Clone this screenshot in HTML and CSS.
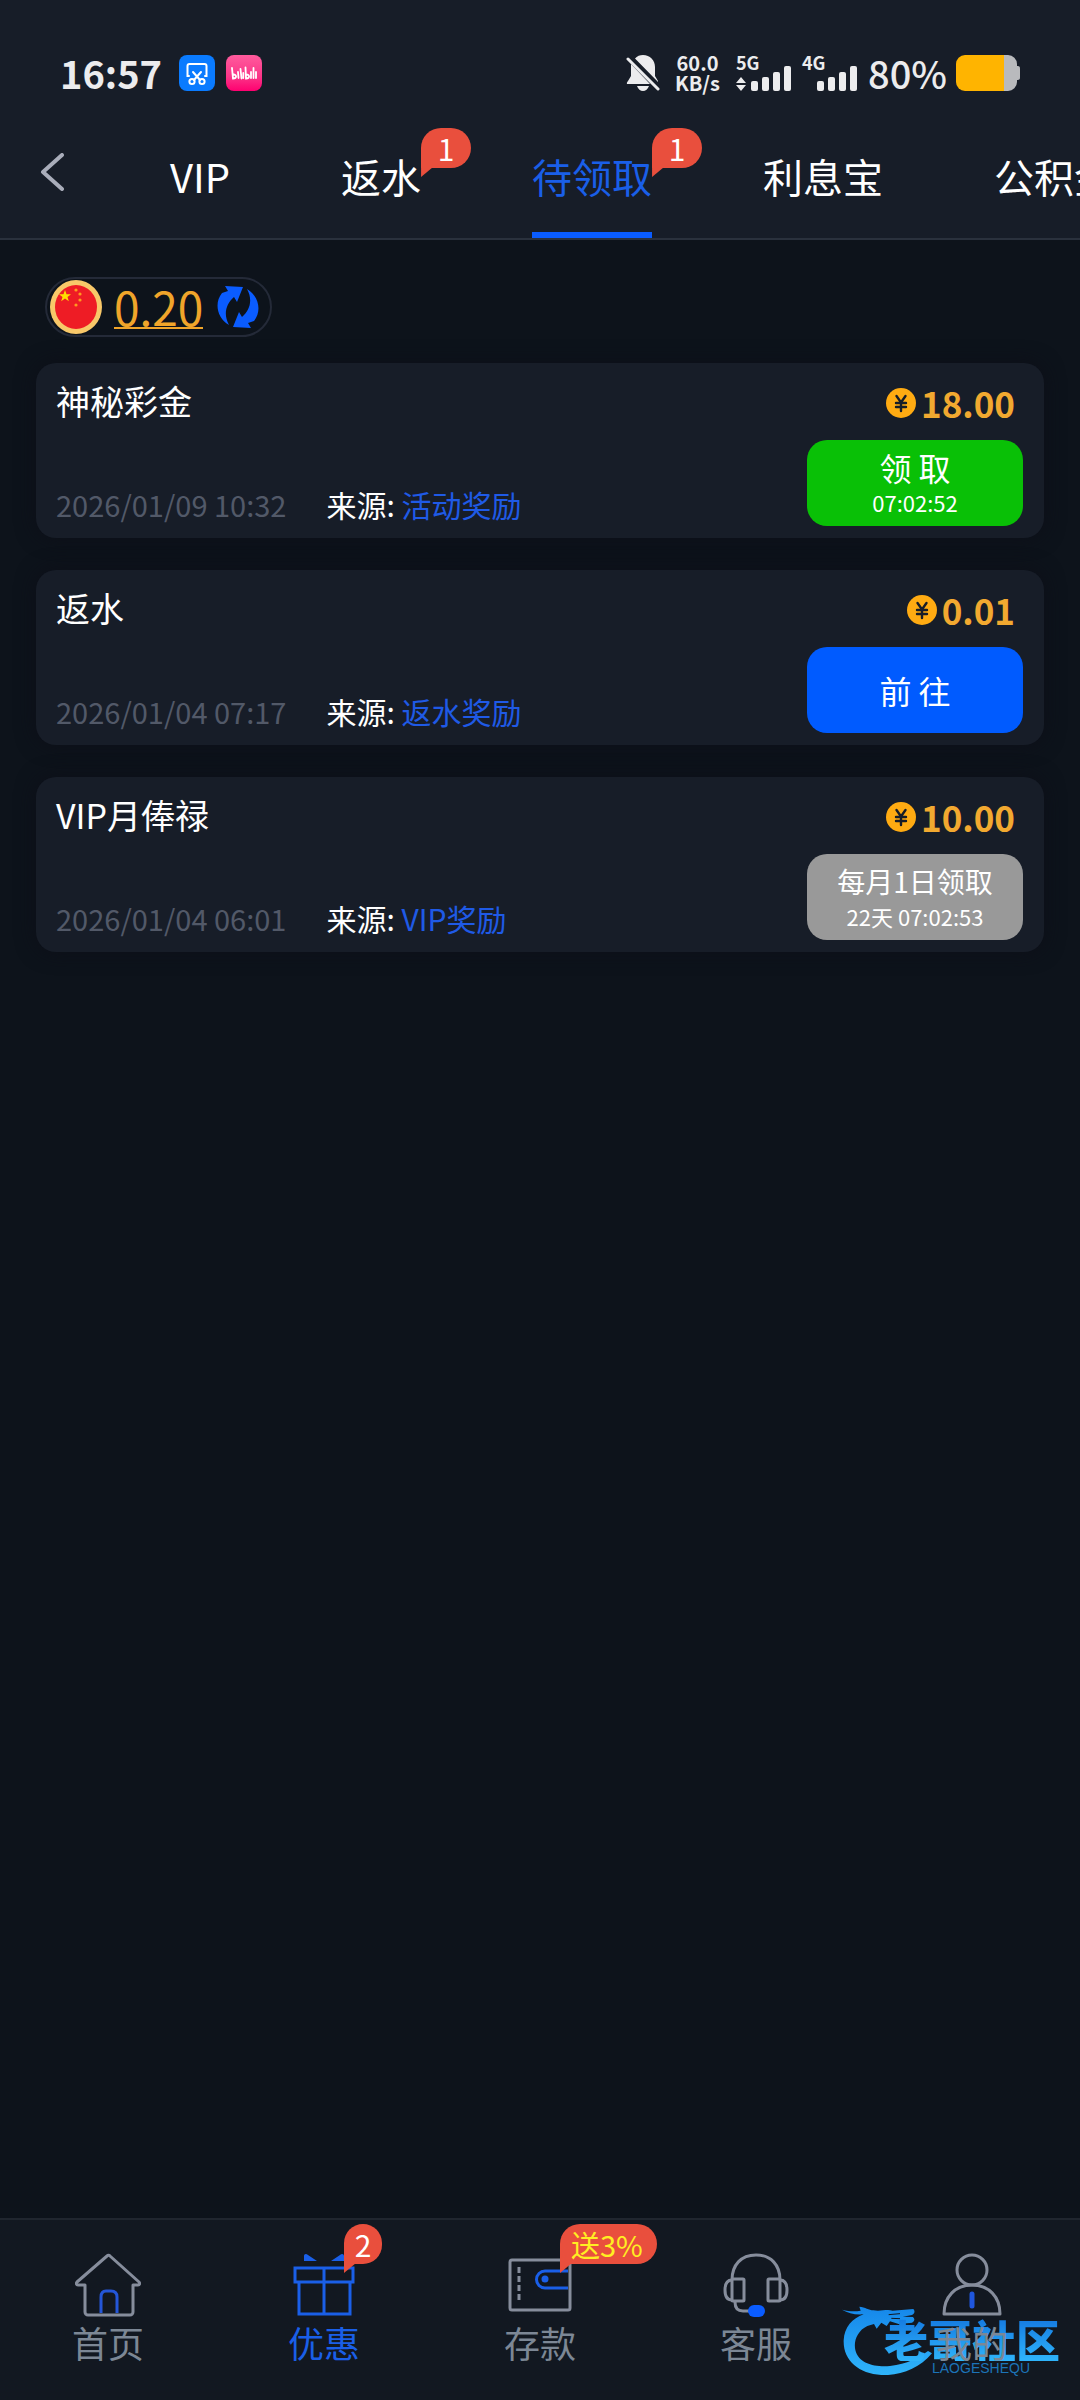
FILE: index.html
```html
<!DOCTYPE html>
<html lang="zh-CN">
<head>
<meta charset="utf-8">
<meta name="viewport" content="width=device-width, initial-scale=1">
<title>待领取</title>
<link rel="stylesheet" href="styles.css">
</head>
<body>
<header class="header">
  <div class="status">
    <div class="status-left">
      <span class="clock">16:57</span>
      <svg class="app-icon" viewBox="0 0 36 36" aria-hidden="true">
        <rect width="36" height="36" rx="8" fill="#0a7bff"/>
        <g fill="none" stroke="#fff" stroke-width="2" stroke-linecap="round">
          <path d="M10 21H8.500V11a2 2 0 0 1 2-2h15a2 2 0 0 1 2 2v10H26"/>
          <path d="M14 17l7 8M22 17l-7 8"/>
          <circle cx="13" cy="26.500" r="2.600"/><circle cx="23" cy="26.500" r="2.600"/>
        </g>
      </svg>
      <svg class="app-icon" viewBox="0 0 36 36" aria-hidden="true">
        <defs><linearGradient id="pink" x2="0" y2="1"><stop offset="0" stop-color="#ff5b9d"/><stop offset=".6" stop-color="#fb3588"/><stop offset="1" stop-color="#ff0070"/></linearGradient></defs>
        <rect width="36" height="36" rx="8" fill="url(#pink)"/>
        <g fill="none" stroke="#fff" stroke-width="1.800" stroke-linecap="round">
          <path d="M6 13l1 10.500c4 0 4-4 .500-4M12 17l.500 6M14.500 14l1 9.500M17.300 18v5M19.500 12.500l.500 11c4 0 4-4 .500-4M25 17v6M27.500 13v10M30 17v6"/>
        </g>
      </svg>
    </div>
    <div class="status-right">
      <svg class="bell" viewBox="0 0 34 36" aria-hidden="true">
        <path fill="#ececee" d="M9 3.500C11 1 14 0 17 0c7 0 12 5 12 12v9l3 5v1L9 3.500zM5 9l19 20H2c-2 0-1-2 0-3l3-5zM11 31h12c-1 3-3.500 5-6 5s-5-2-6-5z"/>
        <path stroke="#ececee" stroke-width="3" stroke-linecap="round" d="M2 4l30 30"/>
      </svg>
      <div class="speed"><span>60.0</span><span>KB/s</span></div>
      <div class="signal">
        <span>5G</span>
        <svg viewBox="0 0 56 26" aria-hidden="true"><path fill="#ececee" d="M0 18l5-6 5 6zM0 20h10l-5 6z"/><g fill="#ececee"><rect x="15" y="16" width="7" height="10" rx="2"/><rect x="26" y="12" width="7" height="14" rx="2"/><rect x="37" y="7" width="7" height="19" rx="2"/><rect x="48" y="1" width="7" height="25" rx="2"/></g></svg>
      </div>
      <div class="signal">
        <span>4G</span>
        <svg viewBox="0 0 56 26" aria-hidden="true"><g fill="#ececee"><rect x="15" y="16" width="7" height="10" rx="2"/><rect x="26" y="12" width="7" height="14" rx="2"/><rect x="37" y="7" width="7" height="19" rx="2"/><rect x="48" y="1" width="7" height="25" rx="2"/></g></svg>
      </div>
      <span class="percent">80%</span>
      <svg class="battery" viewBox="0 0 64 36" aria-hidden="true">
        <path fill="#b9babd" d="M40 0h12a9 9 0 0 1 9 9v2c3 0 3 1 3 3v8c0 2 0 3-3 3v2a9 9 0 0 1-9 9H40z"/>
        <path fill="#ffb400" d="M9 0h39v36H9a9 9 0 0 1-9-9V9a9 9 0 0 1 9-9z"/>
      </svg>
    </div>
  </div>
  <div class="tabbar">
    <button class="back" type="button" aria-label="返回">
      <svg viewBox="0 0 24 38" aria-hidden="true"><path d="M22 2L3 19l19 17" fill="none" stroke="#a9adba" stroke-width="4" stroke-linecap="round" stroke-linejoin="round"/></svg>
    </button>
    <nav class="tabs">
      <a class="tab" href="#vip">VIP</a>
      <a class="tab" href="#rebate">返水<span class="badge">1</span></a>
      <a class="tab active" href="#pending" aria-current="page">待领取<span class="badge">1</span></a>
      <a class="tab" href="#interest">利息宝</a>
      <a class="tab" href="#fund">公积金</a>
    </nav>
  </div>
</header>

<main class="main">
  <div class="balance">
    <svg class="flag" viewBox="0 0 52 54" aria-hidden="true">
      <ellipse cx="26" cy="27" rx="26" ry="27" fill="#f8c869"/>
      <ellipse cx="26" cy="27" rx="21" ry="22" fill="#ee1c25"/>
      <path fill="#ffde00" d="M15 10l1.500 4.200H21l-3.500 2.700 1.300 4.300L15 18.600l-3.800 2.600 1.300-4.300L9 14.200h4.500z"/>
      <g fill="#ff9a1f"><circle cx="26" cy="10" r="1.600"/><circle cx="30" cy="14" r="1.600"/><circle cx="30" cy="20" r="1.600"/><circle cx="26" cy="25" r="1.600"/></g>
    </svg>
    <a class="balance-value" href="#balance">0.20</a>
    <button class="refresh" type="button" aria-label="刷新">
      <svg viewBox="0 0 42 42" aria-hidden="true"><g fill="#0a5cff"><path d="M8 0L26 1L20 16L17 11C9 18 6 28 12 39C0 32-3 17 5 7L11 5z"/><path d="M34 42L16 41L22 26L25 31C33 24 36 14 30 3C42 10 45 25 37 35L31 37z"/></g></svg>
    </button>
  </div>

  <ul class="cards">
    <li class="card">
      <div class="info">
        <h2 class="title">神秘彩金</h2>
        <p class="meta"><time class="date">2026/01/09 10:32</time><span class="source">来源: <a href="#activity">活动奖励</a></span></p>
      </div>
      <div class="side">
        <p class="amount"><svg viewBox="0 0 30 30" aria-hidden="true"><circle cx="15" cy="15" r="15" fill="#ffab12"/><path d="M10.500 8l4.500 6.500L19.500 8M10 15h10M10 19h10M15 14.500V23" fill="none" stroke="#171d28" stroke-width="2.400" stroke-linecap="round"/></svg>18.00</p>
        <button class="action green" type="button"><span class="action-main">领 取</span><span class="action-time">07:02:52</span></button>
      </div>
    </li>
    <li class="card">
      <div class="info">
        <h2 class="title">返水</h2>
        <p class="meta"><time class="date">2026/01/04 07:17</time><span class="source">来源: <a href="#rebate">返水奖励</a></span></p>
      </div>
      <div class="side">
        <p class="amount"><svg viewBox="0 0 30 30" aria-hidden="true"><circle cx="15" cy="15" r="15" fill="#ffab12"/><path d="M10.500 8l4.500 6.500L19.500 8M10 15h10M10 19h10M15 14.500V23" fill="none" stroke="#171d28" stroke-width="2.400" stroke-linecap="round"/></svg>0.01</p>
        <button class="action blue" type="button"><span class="action-main">前 往</span></button>
      </div>
    </li>
    <li class="card">
      <div class="info">
        <h2 class="title">VIP月俸禄</h2>
        <p class="meta"><time class="date">2026/01/04 06:01</time><span class="source">来源: <a href="#vip">VIP奖励</a></span></p>
      </div>
      <div class="side">
        <p class="amount"><svg viewBox="0 0 30 30" aria-hidden="true"><circle cx="15" cy="15" r="15" fill="#ffab12"/><path d="M10.500 8l4.500 6.500L19.500 8M10 15h10M10 19h10M15 14.500V23" fill="none" stroke="#171d28" stroke-width="2.400" stroke-linecap="round"/></svg>10.00</p>
        <button class="action grey" type="button"><span class="action-main small">每月1日领取</span><span class="action-time">22天 07:02:53</span></button>
      </div>
    </li>
  </ul>
</main>

<nav class="bottom">
  <div class="mark">
    <svg viewBox="66 306 660 216" aria-hidden="true">
      <defs><linearGradient id="drag" x2="0" y2="1"><stop offset="0" stop-color="#1587ea"/><stop offset="1" stop-color="#2fb4fa"/></linearGradient></defs>
      <path fill="url(#drag)" d="M66 326c22 6 40 6 56 3l-4-12c18 2 28 10 42 11 22 4 40-4 58 1l62-5c6 6 4 14-4 18l-28 5 30 1c8 5 6 13-2 17l-40 4-26-8-10 14-16-10-14 18-8-14-20 6c-30 14-42 46-36 72 10 42 60 52 104 48 52-6 86-25 114-45l12 7c-38 46-96 68-152 65-68-4-115-44-113-104 2-40 26-66 60-78-28 2-46-4-65-14z"/>
      <path d="M206 341l34-3M214 352l26 1" stroke="#121821" stroke-width="3"/>
    </svg>
    <span class="mark-name">老哥社区</span>
    <span class="mark-latin">LAOGESHEQU</span>
  </div>
  <a class="item" href="#home">
    <svg viewBox="0 0 66 64" aria-hidden="true"><path d="M10 32v27a3 3 0 0 0 3 3h42a3 3 0 0 0 3-3V32h5c2 0 2-2 1-3L35 3a2 2 0 0 0-3 0L2 29c-1 1-1 3 1 3z" fill="none" stroke="#868d9c" stroke-width="3" stroke-linejoin="round"/><path d="M26 60V44c0-4 2-6 5-6h5c4 0 6 2 6 6v16" fill="none" stroke="#2456d8" stroke-width="3"/></svg>
    <span>首页</span>
  </a>
  <a class="item active" href="#offers">
    <span class="badge">2</span>
    <svg viewBox="0 0 66 64" aria-hidden="true"><g fill="none" stroke="#1a5fe8" stroke-width="3"><path d="M4 15h58v14H4zM8 29h51v32H8zM33 15v46"/></g><path fill="#1a5fe8" d="M13 8V3c0-2 2-3 4-1l9 6zM53 8V3c0-2-2-3-4-1l-9 6z"/></svg>
    <span>优惠</span>
  </a>
  <a class="item" href="#deposit">
    <span class="badge gift">送3%</span>
    <svg viewBox="0 0 66 64" aria-hidden="true"><rect x="3" y="7" width="60" height="50" rx="2" fill="none" stroke="#868d9c" stroke-width="3"/><path d="M12 14v36" stroke="#868d9c" stroke-width="3" stroke-dasharray="6 3"/><path d="M61 18H38a8 8 0 0 0 0 17h23" fill="none" stroke="#1a5fe8" stroke-width="3"/><circle cx="38" cy="26" r="3.500" fill="#1a5fe8"/></svg>
    <span>存款</span>
  </a>
  <a class="item" href="#service">
    <svg viewBox="0 0 66 64" aria-hidden="true"><g fill="none" stroke="#868d9c" stroke-width="3"><path d="M9 27c0-15 9-25 24-25s24 10 24 25"/><rect x="9" y="26" width="12" height="22" rx="1"/><rect x="45" y="26" width="12" height="22" rx="1"/><path d="M9 27c-4 0-7 3-7 10s3 10 7 10M57 27c4 0 7 3 7 10s-3 10-7 10M12 49c0 6 3 9 8 9h6"/></g><rect x="25" y="52" width="17" height="12" rx="6" fill="#0a5cff"/></svg>
    <span>客服</span>
  </a>
  <a class="item" href="#mine">
    <svg viewBox="0 0 66 64" aria-hidden="true"><g fill="none" stroke="#868d9c" stroke-width="3" stroke-linejoin="round"><circle cx="33" cy="17" r="15"/><path d="M5 61c0-17 11-29 28-29s28 12 28 29z"/></g><path d="M33 41v12" stroke="#1f56dd" stroke-width="5" stroke-linecap="round"/></svg>
    <span>我的</span>
  </a>
</nav>
</body>
</html>
```
FILE: styles.css
```css
* {
  box-sizing: border-box;
}

body {
  margin: 0;
  min-height: 100vh;
  display: flex;
  flex-direction: column;
  overflow-x: hidden;
  background: #0d131b;
  color: #fff;
  font-family: "Noto Sans CJK SC", "Noto Sans", sans-serif;
}

a {
  color: inherit;
  text-decoration: none;
}

button {
  border: 0;
  padding: 0;
  background: none;
  color: inherit;
  font: inherit;
}

h2, p, ul {
  margin: 0;
  padding: 0;
  font-weight: 400;
  list-style: none;
}

svg {
  display: block;
  flex: none;
}

/* Header */
.header {
  border-bottom: 2px solid #2a313d;
  background: #171d28;
}

.status {
  display: flex;
  justify-content: space-between;
  align-items: center;
  height: 110px;
  padding: 36px 60px 0;
  color: #ececee;
}

.status-left, .status-right {
  display: flex;
  align-items: center;
}

.status-left {
  gap: 11px;
}

.clock {
  margin-right: 6px;
  font-size: 38px;
  font-weight: 700;
  line-height: 44px;
}

.app-icon {
  width: 36px;
  height: 36px;
}

.bell {
  width: 34px;
  height: 36px;
  margin-right: 15px;
}

.speed {
  display: grid;
  margin-right: 16px;
  font-size: 20px;
  font-weight: 700;
  line-height: 20px;
  text-align: center;
}

.signal {
  position: relative;
  padding-top: 10px;
  margin-right: 10px;
}

.signal span {
  position: absolute;
  top: -3px;
  left: 0;
  font-size: 18px;
  font-weight: 700;
  line-height: 20px;
}

.signal svg {
  width: 56px;
  height: 26px;
}

.percent {
  margin-right: 9px;
  font-size: 38px;
  font-weight: 500;
  line-height: 44px;
}

.battery {
  width: 64px;
  height: 36px;
}

.tabbar {
  display: flex;
  overflow: hidden;
}

.back {
  flex: none;
  width: 104px;
  padding: 0 0 4px 40px;
}

.back svg {
  width: 24px;
  height: 38px;
}

.tabs {
  display: flex;
  gap: 111px;
  padding-left: 66px;
}

.tab {
  position: relative;
  padding: 38px 0 28px;
  border-bottom: 6px solid transparent;
  font-size: 40px;
  line-height: 56px;
  white-space: nowrap;
}

.tab.active {
  border-color: #0a5cff;
  color: #1a5fe8;
}

.badge {
  position: absolute;
  top: 18px;
  left: 100%;
  min-width: 50px;
  height: 40px;
  padding: 0 10px;
  border-radius: 20px 20px 20px 0;
  background: #e94f3d;
  color: #fff;
  font-size: 30px;
  line-height: 40px;
  text-align: center;
  white-space: nowrap;
}

.badge::after {
  content: "";
  position: absolute;
  top: 39px;
  left: 0;
  width: 12px;
  height: 10px;
  background: #e94f3d;
  clip-path: polygon(0 0, 100% 0, 0 100%);
}

/* Content */
.main {
  flex: 1;
  padding: 37px 36px;
}

.balance {
  display: flex;
  align-items: center;
  width: fit-content;
  height: 60px;
  margin-left: 9px;
  padding: 0 11px 0 3px;
  border: 2px solid #242a38;
  border-radius: 30px;
}

.flag {
  width: 52px;
  height: 54px;
}

.balance-value {
  margin: 0 14px 0 12px;
  border-bottom: 2px solid #f0a52a;
  color: #f0a52a;
  font-size: 46px;
  line-height: 42px;
}

.refresh svg {
  width: 42px;
  height: 42px;
}

.cards {
  display: grid;
  gap: 32px;
  padding-top: 26px;
}

.card {
  display: flex;
  justify-content: space-between;
  padding: 18px 21px 12px 20px;
  border-radius: 20px;
  background: #171d28;
  box-shadow: 0 0 20px #0d0f18;
}

.info {
  display: flex;
  flex-direction: column;
  justify-content: space-between;
}

.title {
  font-size: 34px;
  line-height: 40px;
}

.meta {
  display: flex;
  gap: 40px;
  line-height: 44px;
}

.date {
  color: #525968;
  font-size: 29px;
}

.source {
  font-size: 30px;
}

.source a {
  color: #1f5ae6;
}

.side {
  display: flex;
  flex-direction: column;
  gap: 15px;
  width: 216px;
}

.amount {
  display: flex;
  justify-content: flex-end;
  align-items: center;
  gap: 5px;
  padding-right: 8px;
  color: #f2a930;
  font-size: 35px;
  font-weight: 700;
  line-height: 44px;
}

.amount svg {
  width: 30px;
  height: 30px;
}

.action {
  display: flex;
  flex-direction: column;
  justify-content: center;
  align-items: center;
  height: 86px;
  border-radius: 20px;
}

.green {
  background: #09c006;
}

.blue {
  background: #005bff;
}

.grey {
  background: #999;
}

.action-main {
  font-size: 32px;
  line-height: 38px;
}

.action-main.small {
  font-size: 28px;
}

.action-time {
  font-size: 22px;
  line-height: 32px;
}

/* Bottom navigation */
.bottom {
  position: relative;
  display: grid;
  grid-template-columns: repeat(5, 1fr);
  height: 182px;
  border-top: 2px solid #20262f;
  background: #121821;
}

.item {
  position: relative;
  display: flex;
  flex-direction: column;
  align-items: center;
  padding-top: 33px;
  color: #7c8795;
  font-size: 36px;
  line-height: 50px;
}

.item svg {
  width: 66px;
  height: 64px;
}

.item.active {
  color: #1a5fe8;
}

.item .badge {
  top: 4px;
  left: calc(50% + 20px);
  z-index: 1;
  min-width: 38px;
}

.item .gift {
  padding: 0 14px 0 11px;
  color: #ffee22;
  font-size: 29px;
}

/* Community mark in the corner, under the last label */
.mark {
  position: absolute;
  right: 18px;
  bottom: 25px;
  width: 220px;
  height: 72px;
}

.mark svg {
  width: 220px;
  height: 72px;
}

.mark-name {
  position: absolute;
  top: 14px;
  left: 42px;
  background: linear-gradient(#1478e0, #2fb4fa);
  background-clip: text;
  color: transparent;
  font-size: 44px;
  font-weight: 900;
  line-height: 44px;
  white-space: nowrap;
}

.mark-latin {
  position: absolute;
  top: 58px;
  left: 90px;
  color: #1c74b8;
  font-family: "Liberation Sans", sans-serif;
  font-size: 14px;
  line-height: 14px;
}
```
